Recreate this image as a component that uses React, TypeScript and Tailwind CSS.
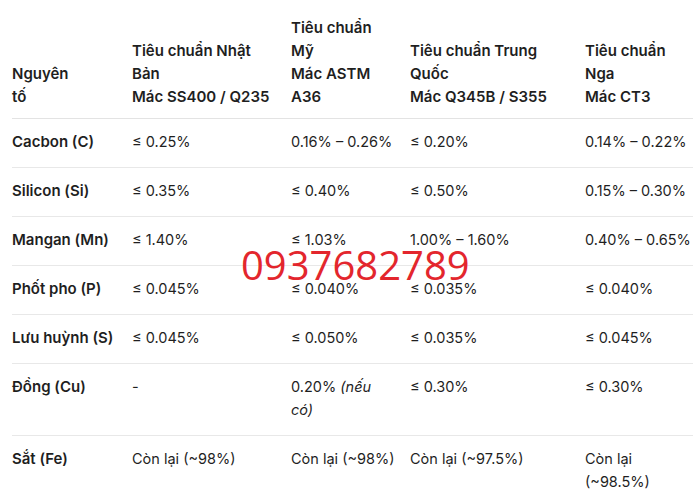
import React from "react";

type Row = { name: string; cells: React.ReactNode[] };

const rows: Row[] = [
  { name: "Cacbon (C)", cells: ["≤ 0.25%", "0.16% – 0.26%", "≤ 0.20%", "0.14% – 0.22%"] },
  { name: "Silicon (Si)", cells: ["≤ 0.35%", "≤ 0.40%", "≤ 0.50%", "0.15% – 0.30%"] },
  { name: "Mangan (Mn)", cells: ["≤ 1.40%", "≤ 1.03%", "1.00% – 1.60%", "0.40% – 0.65%"] },
  { name: "Phốt pho (P)", cells: ["≤ 0.045%", "≤ 0.040%", "≤ 0.035%", "≤ 0.040%"] },
  { name: "Lưu huỳnh (S)", cells: ["≤ 0.045%", "≤ 0.050%", "≤ 0.035%", "≤ 0.045%"] },
  {
    name: "Đồng (Cu)",
    cells: [
      "-",
      <>
        0.20% <em>(nếu</em>
        <br />
        <em>có)</em>
      </>,
      "≤ 0.30%",
      "≤ 0.30%",
    ],
  },
  {
    name: "Sắt (Fe)",
    cells: [
      "Còn lại (~98%)",
      "Còn lại (~98%)",
      "Còn lại (~97.5%)",
      <>
        Còn lại
        <br />
        (~98.5%)
      </>,
    ],
  },
];

const headers: React.ReactNode[] = [
  <>
    Nguyên
    <br />
    tố
  </>,
  <>
    Tiêu chuẩn Nhật
    <br />
    Bản
    <br />
    Mác SS400 / Q235
  </>,
  <>
    Tiêu chuẩn
    <br />
    Mỹ
    <br />
    Mác ASTM
    <br />
    A36
  </>,
  <>
    Tiêu chuẩn Trung
    <br />
    Quốc
    <br />
    Mác Q345B / S355
  </>,
  <>
    Tiêu chuẩn
    <br />
    Nga
    <br />
    Mác CT3
  </>,
];

const widths = ["w-[120px]", "w-[159px]", "w-[119px]", "w-[175px]", "w-[108px]"];

export default function App() {
  return (
    <div
      className="relative w-[700px] h-[500px] overflow-hidden bg-white px-3 pt-1 text-[#1f1f1f]"
      style={{ fontFamily: "Inter, 'Noto Sans', sans-serif" }}
    >
      <table className="table-fixed w-[681px] border-collapse text-[14.5px] leading-[23px]">
        <colgroup>
          {widths.map((w) => (
            <col key={w} className={w} />
          ))}
        </colgroup>
        <thead>
          <tr className="border-b border-[#e3e3e3]">
            {headers.map((h, i) => (
              <th
                key={i}
                className="text-left align-bottom text-[15px] font-semibold pt-3 pb-[10px] pr-3 last:pr-0 whitespace-nowrap"
              >
                {h}
              </th>
            ))}
          </tr>
        </thead>
        <tbody>
          {rows.map((r) => (
            <tr key={r.name} className="border-b border-[#e8e8e8] last:border-b-0">
              <td className="align-top text-[15px] font-semibold pt-[11px] pb-[14px] pr-3 whitespace-nowrap">
                {r.name}
              </td>
              {r.cells.map((c, i) => (
                <td key={i} className="align-top pt-[11px] pb-[14px] pr-3 last:pr-0 whitespace-nowrap">
                  {c}
                </td>
              ))}
            </tr>
          ))}
        </tbody>
      </table>

      {/* watermark */}
      <div
        className="absolute left-[241px] top-[242px] text-[40px] leading-[46px] text-[#e3262d]"
        style={{ fontFamily: "'Open Sans', sans-serif" }}
      >
        0937682789
      </div>
    </div>
  );
}
